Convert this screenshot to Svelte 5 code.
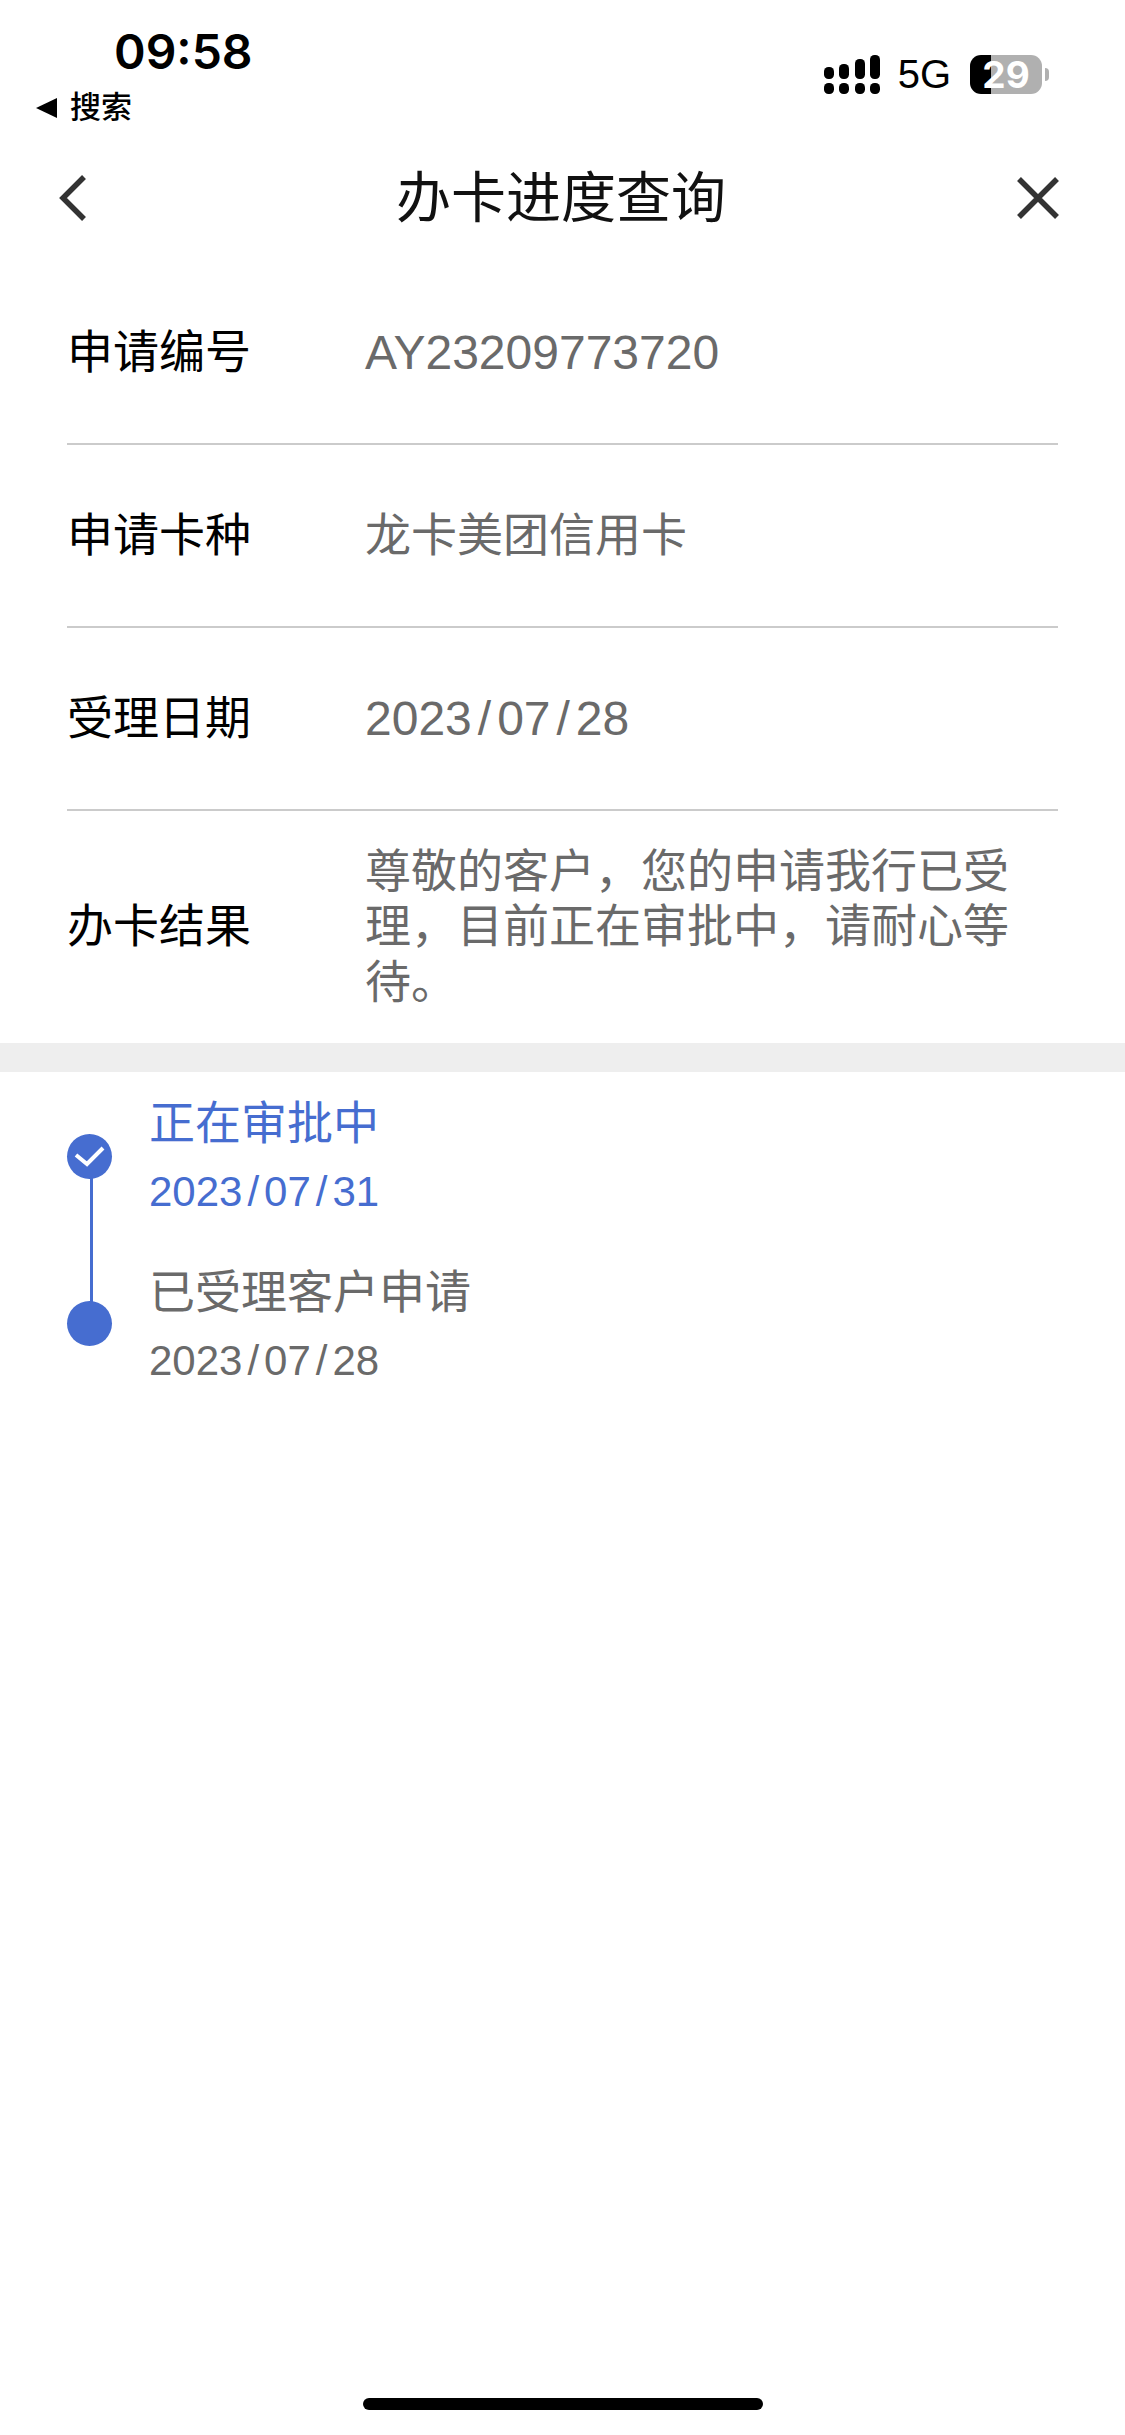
<script>
  const rows = [
    { label: '申请编号', value: 'AY23209773720', latin: true },
    { label: '申请卡种', value: '龙卡美团信用卡' },
    { label: '受理日期', value: '2023/07/28', latin: true, date: true }
  ];
</script>

{#snippet dated(text)}
  {#each text.split('/') as part, i}{#if i > 0}<span class="slash">/</span>{/if}{part}{/each}
{/snippet}

<div class="page">
  <header class="status">
    <div class="status-left">
      <div class="time">09:58</div>
      <div class="back-app"><span class="tri"></span><span>搜索</span></div>
    </div>
    <div class="status-right">
      <svg class="signal" width="56" height="39" viewBox="0 0 56 39" fill="#000">
        <rect x="0" y="12" width="10" height="12" rx="4.5"/>
        <rect x="15" y="9" width="10" height="15" rx="4.5"/>
        <rect x="31" y="4" width="10" height="20" rx="4.5"/>
        <rect x="46" y="0" width="10" height="24" rx="4.5"/>
        <rect x="0" y="28" width="10" height="11" rx="4.5"/>
        <rect x="15" y="28" width="10" height="11" rx="4.5"/>
        <rect x="31" y="28" width="10" height="11" rx="4.5"/>
        <rect x="46" y="28" width="10" height="11" rx="4.5"/>
      </svg>
      <span class="net">5G</span>
      <div class="battery"><span>29</span></div>
      <span class="nub"></span>
    </div>
  </header>

  <nav class="nav">
    <svg class="back" width="28" height="46" viewBox="0 0 28 46" fill="none" stroke="#333" stroke-width="5.5">
      <path d="M25 2 L4 23 L25 44"/>
    </svg>
    <h1>办卡进度查询</h1>
    <svg class="close" width="42" height="42" viewBox="0 0 42 42" fill="none" stroke="#333" stroke-width="5.5">
      <path d="M2 2 L40 40 M40 2 L2 40"/>
    </svg>
  </nav>

  <section class="info">
    {#each rows as r}
      <div class="row">
        <div class="label">{r.label}</div>
        <div class="value" class:latin={r.latin}>
          {#if r.date}{@render dated(r.value)}{:else}{r.value}{/if}
        </div>
      </div>
    {/each}
    <div class="row result">
      <div class="label">办卡结果</div>
      <div class="value">尊敬的客户，您的申请我行已受理，目前正在审批中，请耐心等待。</div>
    </div>
  </section>

  <div class="band"></div>

  <section class="timeline">
    <div class="step active">
      <div class="text">
        <div class="title">正在审批中</div>
        <div class="when">{@render dated('2023/07/31')}</div>
      </div>
      <div class="dot">
        <svg width="45" height="45" viewBox="0 0 45 45" fill="none" stroke="#fff" stroke-width="4">
          <path d="M9 21 L20 30 L36 14"/>
        </svg>
      </div>
      <div class="line"></div>
    </div>
    <div class="step">
      <div class="text">
        <div class="title">已受理客户申请</div>
        <div class="when">{@render dated('2023/07/28')}</div>
      </div>
      <div class="dot"></div>
    </div>
  </section>

  <div class="home"></div>
</div>

<style>
  :global(body) {
    margin: 0;
    background: #fff;
  }
  .page {
    width: 1125px;
    height: 2435px;
    display: flex;
    flex-direction: column;
    overflow: hidden;
    background: #fff;
    font-family: "Liberation Sans", "Noto Sans CJK SC", sans-serif;
    color: #000;
  }

  .status {
    height: 138px;
    display: flex;
    justify-content: space-between;
    flex-shrink: 0;
  }
  .status-left {
    padding: 23px 0 0 36px;
  }
  .time {
    margin-left: 78px;
    font-family: "Inter", "Liberation Sans", sans-serif;
    font-size: 48px;
    line-height: 58px;
    font-weight: 600;
  }
  .back-app {
    display: flex;
    align-items: center;
    gap: 13px;
    font-size: 31px;
    line-height: 40px;
    margin-top: 7px;
    font-weight: 500;
  }
  .tri {
    width: 0;
    height: 0;
    border-style: solid;
    border-width: 10px 21px 10px 0;
    border-color: transparent #000 transparent transparent;
  }
  .status-right {
    display: flex;
    align-items: flex-start;
    padding: 55px 76px 0 0;
  }
  .net {
    font-size: 40px;
    line-height: 46px;
    margin: -4px 19px 0 18px;
  }
  .battery {
    width: 72px;
    height: 39px;
    border-radius: 11px;
    background: linear-gradient(to right, #000 0, #000 21px, #b0b0b0 21px, #b0b0b0 100%);
    color: #fff;
    font-family: "Inter", "Liberation Sans", sans-serif;
    font-size: 37px;
    font-weight: 700;
    line-height: 39px;
    text-align: center;
  }
  .nub {
    width: 4px;
    height: 13px;
    margin: 13px 0 0 3px;
    border-radius: 0 5px 5px 0;
    background: #b0b0b0;
  }

  .nav {
    height: 120px;
    display: grid;
    grid-template-columns: 1fr auto 1fr;
    align-items: center;
    padding: 0 62px 0 59px;
    flex-shrink: 0;
  }
  .nav .close {
    justify-self: end;
    margin-right: 4px;
  }
  .nav h1 {
    margin: 0;
    font-size: 55px;
    line-height: 76px;
    font-weight: 400;
    color: #111;
  }

  .info {
    padding: 4px 67px 0;
  }
  .row {
    height: 181px;
    display: flex;
    align-items: center;
    border-bottom: 2px solid #cbcbcb;
    font-size: 46px;
  }
  .row:last-child {
    border-bottom: 0;
  }
  .row.result {
    height: 232px;
  }
  .label {
    width: 298px;
    flex-shrink: 0;
    line-height: 55.5px;
    color: #000;
  }
  .value {
    color: #6a6a6a;
    font-size: 46px;
    line-height: 55.5px;
    width: 650px;
  }
  .latin {
    font-size: 48px;
  }
  .slash {
    margin: 0 6px;
  }

  .band {
    height: 29px;
    background: #eeeeee;
    flex-shrink: 0;
  }

  .timeline {
    padding: 20px 0 0 67px;
  }
  .step {
    position: relative;
    height: 167px;
    padding-left: 82px;
    color: #6a6a6a;
  }
  .step.active {
    color: #466dd0;
  }
  .step + .step .text {
    padding-top: 2px;
  }
  .title {
    font-size: 46px;
    line-height: 62px;
  }
  .when {
    font-size: 42px;
    line-height: 56px;
    margin-top: 10px;
  }
  .when .slash {
    margin: 0 5px;
  }
  .dot {
    position: absolute;
    left: 0;
    top: 42px;
    width: 45px;
    height: 45px;
    border-radius: 50%;
    background: #466dd0;
  }
  .dot svg {
    display: block;
  }
  .line {
    position: absolute;
    left: 23px;
    top: 86px;
    width: 3px;
    height: 125px;
    background: #466dd0;
  }

  .home {
    width: 400px;
    height: 12px;
    margin: auto auto 25px;
    border-radius: 6px;
    background: #000;
  }
</style>
